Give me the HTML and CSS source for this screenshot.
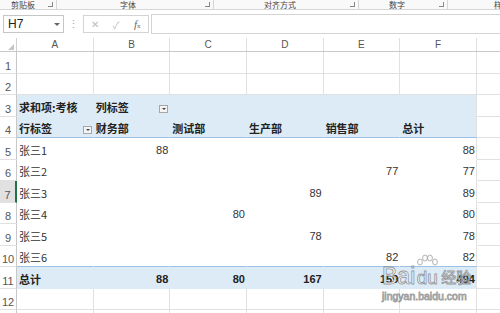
FILE: index.html
```html
<!DOCTYPE html>
<html>

<head>
    <title>数据透视表</title>
    <meta charset="utf-8" />
    <link rel="stylesheet" href="styles.css">
</head>

<body>
    <!-- 功能区分组标签 -->
    <div class="ribbon">
        <div class="grp g1"><span class="glabel">剪贴板</span><i class="launch"></i></div>
        <div class="grp g2"><span class="glabel">字体</span><i class="launch"></i></div>
        <div class="grp g3"><span class="glabel">对齐方式</span><i class="launch"></i></div>
        <div class="grp g4"><span class="glabel">数字</span><i class="launch"></i></div>
        <div class="grp g5"><span class="glabel">样</span></div>
    </div>

    <!-- 编辑栏 -->
    <div class="fbar">
        <div class="namebox"><span>H7</span><span class="ddarrow"></span></div>
        <div class="vdots">⋮</div>
        <div class="fbtns">
            <span class="fbtn">✕</span>
            <span class="fbtn">✓</span>
            <span class="fbtn fx"><i>f</i><small>x</small></span>
        </div>
        <div class="finput"></div>
    </div>

    <!-- 表格 -->
    <div class="sheet">
        <div class="row colhead">
            <div class="corner"><span class="tri"></span></div>
            <div class="ch">A</div>
            <div class="ch">B</div>
            <div class="ch">C</div>
            <div class="ch">D</div>
            <div class="ch">E</div>
            <div class="ch">F</div>
            <div class="ch last"></div>
        </div>

        <div class="row">
            <div class="rh">1</div>
            <div class="c"></div><div class="c"></div><div class="c"></div>
            <div class="c"></div><div class="c"></div><div class="c"></div>
            <div class="c g"></div>
        </div>
        <div class="row">
            <div class="rh">2</div>
            <div class="c"></div><div class="c"></div><div class="c"></div>
            <div class="c"></div><div class="c"></div><div class="c"></div>
            <div class="c g"></div>
        </div>

        <div class="row">
            <div class="rh">3</div>
            <div class="c pv">求和项:考核</div>
            <div class="c pv split">列标签<span class="filt"></span></div>
            <div class="c pv"></div><div class="c pv"></div><div class="c pv"></div>
            <div class="c pv edge"></div>
            <div class="c g"></div>
        </div>
        <div class="row">
            <div class="rh">4</div>
            <div class="c pv hd split">行标签<span class="filt"></span></div>
            <div class="c pv hd">财务部</div>
            <div class="c pv hd">测试部</div>
            <div class="c pv hd">生产部</div>
            <div class="c pv hd">销售部</div>
            <div class="c pv hd edge">总计</div>
            <div class="c g"></div>
        </div>

        <div class="row">
            <div class="rh">5</div>
            <div class="c pl">张三1</div>
            <div class="c pl num">88</div>
            <div class="c pl"></div><div class="c pl"></div><div class="c pl"></div>
            <div class="c pl num edge">88</div>
            <div class="c g"></div>
        </div>
        <div class="row">
            <div class="rh">6</div>
            <div class="c pl">张三2</div>
            <div class="c pl"></div><div class="c pl"></div><div class="c pl"></div>
            <div class="c pl num">77</div>
            <div class="c pl num edge">77</div>
            <div class="c g"></div>
        </div>
        <div class="row">
            <div class="rh sel">7</div>
            <div class="c pl">张三3</div>
            <div class="c pl"></div><div class="c pl"></div>
            <div class="c pl num">89</div>
            <div class="c pl"></div>
            <div class="c pl num edge">89</div>
            <div class="c g"></div>
        </div>
        <div class="row">
            <div class="rh">8</div>
            <div class="c pl">张三4</div>
            <div class="c pl"></div>
            <div class="c pl num">80</div>
            <div class="c pl"></div><div class="c pl"></div>
            <div class="c pl num edge">80</div>
            <div class="c g"></div>
        </div>
        <div class="row">
            <div class="rh">9</div>
            <div class="c pl">张三5</div>
            <div class="c pl"></div><div class="c pl"></div>
            <div class="c pl num">78</div>
            <div class="c pl"></div>
            <div class="c pl num edge">78</div>
            <div class="c g"></div>
        </div>
        <div class="row">
            <div class="rh">10</div>
            <div class="c pl hd">张三6</div>
            <div class="c pl hd"></div><div class="c pl hd"></div><div class="c pl hd"></div>
            <div class="c pl hd num">82</div>
            <div class="c pl hd num edge">82</div>
            <div class="c g"></div>
        </div>

        <div class="row">
            <div class="rh">11</div>
            <div class="c pv tot">总计</div>
            <div class="c pv tot num">88</div>
            <div class="c pv tot num">80</div>
            <div class="c pv tot num">167</div>
            <div class="c pv tot num">159</div>
            <div class="c pv tot num edge">494</div>
            <div class="c g"></div>
        </div>

        <div class="row">
            <div class="rh">12</div>
            <div class="c"></div><div class="c"></div><div class="c"></div>
            <div class="c"></div><div class="c"></div><div class="c"></div>
            <div class="c g"></div>
        </div>
        <div class="row">
            <div class="rh"></div>
            <div class="c"></div><div class="c"></div><div class="c"></div>
            <div class="c"></div><div class="c"></div><div class="c"></div>
            <div class="c g"></div>
        </div>
    </div>

    <!-- 水印 -->
    <div class="wm">
        <div class="wm-top">
            <span class="wm-bai">Bai</span>
            <span class="wm-du">
                <svg class="paw" width="22" height="14" viewBox="0 0 22 14">
                    <ellipse cx="4" cy="8" rx="2.4" ry="3" />
                    <ellipse cx="9" cy="4" rx="2.4" ry="3" />
                    <ellipse cx="14" cy="4" rx="2.4" ry="3" />
                    <ellipse cx="19" cy="8" rx="2.4" ry="3" />
                </svg>
                <span>du</span>
            </span>
            <span class="wm-cn">经验</span>
        </div>
        <div class="wm-url">jingyan.baidu.com</div>
    </div>
</body>

</html>
```

FILE: styles.css
```css
body {
    margin: 0;
    padding: 0;
    overflow: hidden;
    background-color: #fff;
    font-family: "Liberation Sans", "Noto Sans CJK SC", sans-serif;
    color: #333;
    width: 500px;
    height: 313px;
    position: relative;
}

/* 功能区 */
.ribbon {
    display: flex;
    height: 9px;
    background-color: #f9f9f9;
    border-bottom: 1px solid #d6d6d6;
}

.grp {
    display: flex;
    align-items: center;
    border-right: 1px solid #d6d6d6;
    height: 9px;
    box-sizing: border-box;
}

.glabel {
    font-size: 8px;
    line-height: 9px;
    color: #444;
    font-family: "Noto Sans CJK SC", sans-serif;
}

.launch {
    margin-left: auto;
    margin-right: 3px;
    width: 4px;
    height: 4px;
    border-right: 1px solid #888;
    border-bottom: 1px solid #888;
}

.g1 { width: 57px; padding-left: 11px; }
.g2 { width: 157px; padding-left: 63px; }
.g3 { width: 145px; padding-left: 50px; }
.g4 { width: 89px; padding-left: 30px; }
.g5 { flex: 1; padding-left: 46px; border-right: none; overflow: hidden; }

/* 编辑栏 */
.fbar {
    display: flex;
    align-items: center;
    height: 28px;
    box-sizing: border-box;
    padding-left: 3px;
}

.namebox {
    display: flex;
    align-items: center;
    width: 61px;
    height: 18px;
    box-sizing: border-box;
    border: 1px solid #c6c6c6;
    padding-left: 4px;
    font-size: 12px;
    color: #222;
}

.ddarrow {
    margin-left: auto;
    margin-right: 3px;
    border-left: 3px solid transparent;
    border-right: 3px solid transparent;
    border-top: 3px solid #666;
}

.vdots {
    width: 19px;
    text-align: center;
    color: #aaa;
    font-size: 11px;
}

.fbtns {
    display: flex;
    align-items: center;
    width: 66px;
    height: 18px;
    box-sizing: border-box;
    border: 1px solid #d4d4d4;
}

.fbtn {
    flex: 1;
    text-align: center;
    color: #bbb;
    font-size: 10px;
}

.fx {
    color: #666;
    font-family: "Liberation Serif", serif;
    font-size: 11px;
}

.fx small {
    font-size: 7px;
}

.finput {
    flex: 1;
    height: 18px;
    margin-left: 2px;
    border: 1px solid #d4d4d4;
    border-right: none;
}

/* 表格 */
.sheet {
    height: 275px;
    overflow: hidden;
}

.row {
    display: grid;
    grid-template-columns: 17px repeat(6, 76.67px) 1fr;
    height: 21.5px;
}

.colhead {
    height: 14px;
    border-bottom: 1px solid #c8c8c8;
    box-sizing: border-box;
}

.corner {
    position: relative;
    border-right: 1px solid #d0d0d0;
}

.tri {
    position: absolute;
    right: 2px;
    bottom: 1px;
    width: 0;
    height: 0;
    border-left: 6px solid transparent;
    border-bottom: 6px solid #c6c6c6;
}

.ch {
    text-align: center;
    font-size: 10px;
    line-height: 13px;
    color: #555;
    border-right: 1px solid #e0e0e0;
}

.ch.last {
    border-right: none;
}

.rh {
    display: flex;
    align-items: flex-end;
    justify-content: center;
    padding-bottom: 1px;
    box-sizing: border-box;
    font-size: 11px;
    color: #555;
    border-right: 1px solid #c8c8c8;
    border-bottom: 1px solid #e1e1e1;
}

.rh.sel {
    background-color: #e1e1e1;
    border-right: 2px solid #217346;
}

.c {
    display: flex;
    align-items: flex-end;
    box-sizing: border-box;
    padding: 0 2px 2px 2px;
    font-size: 11px;
    white-space: nowrap;
    color: #333;
    border-right: 1px solid #e1e1e1;
    border-bottom: 1px solid #e1e1e1;
    font-family: "Noto Sans CJK SC", sans-serif;
    line-height: 14px;
}

.c.g {
    border-right: none;
}

.c.num {
    justify-content: flex-end;
    font-family: "Liberation Sans", sans-serif;
    padding-right: 1px;
}

/* 透视表区域 */
.c.pv {
    background-color: #ddebf7;
    border-right-color: #ddebf7;
    border-bottom-color: #ddebf7;
    font-weight: bold;
    color: #222;
}

.c.pv.hd {
    border-bottom-color: #9bc2e6;
}

.c.pl {
    border-right-color: #fff;
    border-bottom-color: #fff;
}

.c.pl.hd {
    border-bottom-color: #9bc2e6;
}

.c.edge {
    border-right-color: #e1e1e1;
}

.c.split {
    justify-content: space-between;
    padding-right: 1px;
}

.filt {
    width: 9px;
    height: 8px;
    box-sizing: border-box;
    border: 1px solid #a6a6a6;
    background-color: #f4f4f4;
    position: relative;
    margin-bottom: 1px;
}

.filt::after {
    content: "";
    position: absolute;
    left: 2px;
    top: 2px;
    border-left: 2px solid transparent;
    border-right: 2px solid transparent;
    border-top: 2px solid #444;
}

/* 水印 */
.wm {
    position: absolute;
    left: 382px;
    top: 244px;
    color: rgba(255, 255, 255, 0.9);
    -webkit-text-stroke: 0.8px rgba(110, 110, 110, 0.65);
    text-shadow: 0 0 1px rgba(0, 0, 0, 0.25);
    font-family: "Liberation Sans", sans-serif;
    z-index: 5;
}

.wm-top {
    display: flex;
    align-items: flex-end;
    height: 44px;
}

.wm-bai {
    font-size: 23px;
    line-height: 24px;
}

.wm-du {
    display: flex;
    flex-direction: column;
    align-items: center;
    font-size: 19px;
    line-height: 20px;
    margin-left: 1px;
}

.paw {
    fill: rgba(255, 255, 255, 0.9);
    stroke: rgba(110, 110, 110, 0.65);
    stroke-width: 0.8;
}

.wm-cn {
    font-family: "Noto Sans CJK SC", sans-serif;
    font-size: 15px;
    line-height: 18px;
    margin-left: 3px;
    margin-bottom: 2px;
}

.wm-url {
    font-size: 10.5px;
    line-height: 12px;
    margin-top: 2px;
}
```
